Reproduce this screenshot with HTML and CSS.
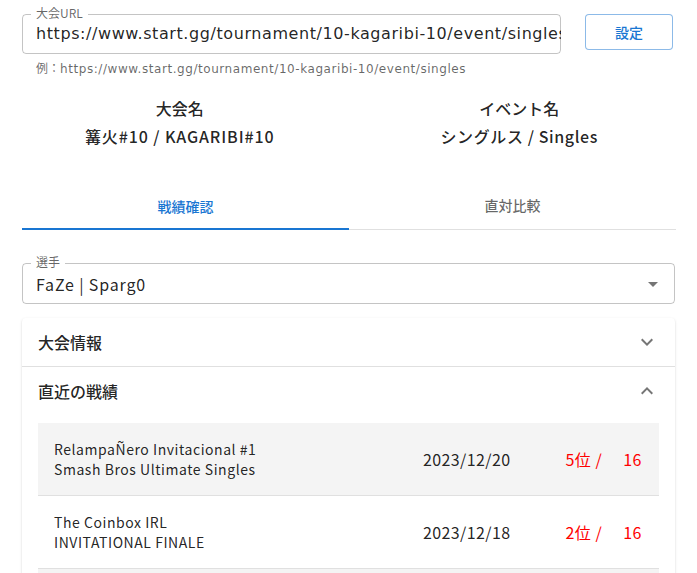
FILE: index.html
```html
<!DOCTYPE html>
<html lang="ja">
<head>
<meta charset="utf-8">
<link rel="stylesheet" href="styles.css">
</head>
<body>
<div class="page">
  <div class="url-row">
    <div class="field url-field">
      <fieldset class="outline"><legend><span>大会URL</span></legend></fieldset>
      <label class="float-label">大会URL</label>
      <div class="url-value">https://www.start.gg/tournament/10-kagaribi-10/event/singles</div>
    </div>
    <button class="set-btn">設定</button>
  </div>
  <div class="helper"><span class="jp">例：</span>https://www.start.gg/tournament/10-kagaribi-10/event/singles</div>

  <div class="info">
    <div class="info-col">
      <div class="info-title">大会名</div>
      <div class="info-value">篝火#10 / KAGARIBI#10</div>
    </div>
    <div class="info-col">
      <div class="info-title">イベント名</div>
      <div class="info-value">シングルス / Singles</div>
    </div>
  </div>

  <div class="tabs">
    <div class="tab active">戦績確認</div>
    <div class="tab">直対比較</div>
  </div>

  <div class="field select-field">
    <fieldset class="outline"><legend><span>選手</span></legend></fieldset>
    <label class="float-label">選手</label>
    <div class="select-value">FaZe | Sparg0</div>
    <svg class="drop" viewBox="0 0 24 24" width="24" height="24"><path d="M7 10l5 5 5-5z" fill="rgba(0,0,0,0.54)"/></svg>
  </div>

  <div class="card">
    <div class="acc">
      <div class="summary">
        <span>大会情報</span>
        <svg viewBox="0 0 24 24" width="24" height="24"><path d="M16.59 8.59 12 13.17 7.41 8.59 6 10l6 6 6-6z" fill="rgba(0,0,0,0.54)"/></svg>
      </div>
    </div>
    <div class="acc acc-sep">
      <div class="summary">
        <span>直近の戦績</span>
        <svg viewBox="0 0 24 24" width="24" height="24"><path d="M7.41 15.41 12 10.83l4.59 4.58L18 14l-6-6-6 6z" fill="rgba(0,0,0,0.54)"/></svg>
      </div>
      <div class="details">
        <div class="row shaded">
          <div class="name">RelampaÑero Invitacional #1<br>Smash Bros Ultimate Singles</div>
          <div class="date">2023/12/20</div>
          <div class="rank"><span>5位 /</span><span class="total">16</span></div>
        </div>
        <div class="row">
          <div class="name">The Coinbox IRL<br>INVITATIONAL FINALE</div>
          <div class="date">2023/12/18</div>
          <div class="rank"><span>2位 /</span><span class="total">16</span></div>
        </div>
        <div class="row shaded"></div>
      </div>
    </div>
  </div>
</div>
</body>
</html>
```

FILE: styles.css
```css
* { box-sizing: border-box; }
html, body { margin: 0; padding: 0; background: #fff; }
body {
  font-family: "Noto Sans CJK JP", "Noto Sans", sans-serif;
  color: rgba(0,0,0,0.87);
  overflow: hidden;
  height: 573px;
}
.page { padding: 14px 23px 0 22px; }

.url-row { display: flex; align-items: flex-start; gap: 24px; }

.field { position: relative; }
.outline {
  position: absolute;
  inset: -5px 0 0 0;
  margin: 0;
  padding: 0 8px;
  border: 1px solid rgba(0,0,0,0.23);
  border-radius: 4px;
  pointer-events: none;
}
.outline legend {
  padding: 0;
  visibility: hidden;
  height: 11px;
  line-height: 11px;
  font-family: "Noto Sans CJK JP", sans-serif;
}
.outline legend span { padding: 0 5px; font-size: 12px; }
.float-label {
  position: absolute;
  left: 14px;
  top: -7px;
  font-size: 12px;
  line-height: 12px;
  color: rgba(0,0,0,0.6);
}

.url-field { width: 539px; height: 40px; }
.url-value {
  font-family: "DejaVu Sans", sans-serif;
  font-size: 16px;
  letter-spacing: 0.58px;
  line-height: 23px;
  padding: 8px 14px 9px 14px;
  white-space: nowrap;
  overflow: hidden;
}

.set-btn {
  width: 88px;
  height: 36px;
  border: 1px solid rgba(25,118,210,0.5);
  border-radius: 4px;
  background: #fff;
  color: #1976d2;
  font-family: "Noto Sans CJK JP", sans-serif;
  font-size: 14px;
  font-weight: 500;
  padding: 0;
}

.helper {
  font-family: "DejaVu Sans", sans-serif;
  font-size: 12px;
  letter-spacing: 0.56px;
  line-height: 20px;
  color: rgba(0,0,0,0.6);
  padding: 4px 14px 0;
}
.helper .jp { font-family: "Noto Sans CJK JP", sans-serif; letter-spacing: 0; }

.info {
  display: grid;
  grid-template-columns: 1fr 1fr;
  margin: 15px -15px 0 -12px;
}
.info-col { text-align: center; }
.info-title, .info-value {
  font-size: 16px;
  font-weight: 500;
  line-height: 28px;
}
.info-value { letter-spacing: 0.9px; }
.info-col:last-child .info-value { letter-spacing: 0.6px; }

.tabs {
  display: grid;
  grid-template-columns: 1fr 1fr;
  margin-top: 34px;
  border-bottom: 1px solid #e0e0e0;
  margin-right: -2px;
}
.tab {
  height: 45px;
  display: flex;
  align-items: center;
  justify-content: center;
  font-size: 14px;
  font-weight: 500;
  color: rgba(0,0,0,0.6);
  padding-bottom: 3px;
}
.tab.active {
  color: #1976d2;
  box-shadow: inset 0 -2px 0 #1976d2;
  margin-bottom: -1px;
  height: 46px;
}

.select-field {
  margin-top: 33px;
  height: 41px;
  margin-right: -1px;
}
.select-value {
  font-size: 16px;
  letter-spacing: 0.85px;
  line-height: 24px;
  padding: 9px 14px 8px 14px;
}
.drop { position: absolute; right: 10px; top: 9px; }

.card {
  margin-top: 14px;
  margin-right: -1px;
  border-radius: 4px;
  box-shadow: 0 2px 1px -1px rgba(0,0,0,0.2), 0 1px 1px 0 rgba(0,0,0,0.14), 0 1px 3px 0 rgba(0,0,0,0.12);
  background: #fff;
}
.acc-sep { border-top: 1px solid rgba(0,0,0,0.12); }
.summary {
  height: 48px;
  display: flex;
  align-items: center;
  justify-content: space-between;
  padding: 0 16px;
  font-size: 16px;
  font-weight: 500;
}
.summary svg { display: block; }
.details { padding: 8px 16px 16px; }
.row {
  display: grid;
  grid-template-columns: 1fr 142px 77px;
  align-items: center;
  height: 73px;
  border-bottom: 1px solid #e0e0e0;
  padding: 0 17px 0 16px;
}
.row.shaded { background: #f4f4f4; }
.name { font-size: 14px; line-height: 20px; letter-spacing: 0.55px; }
.date { font-size: 16px; letter-spacing: 0.4px; }
.rank {
  font-size: 16px;
  letter-spacing: 0.5px;
  color: #ff0000;
  display: flex;
  justify-content: flex-end;
  gap: 21px;
}
```
